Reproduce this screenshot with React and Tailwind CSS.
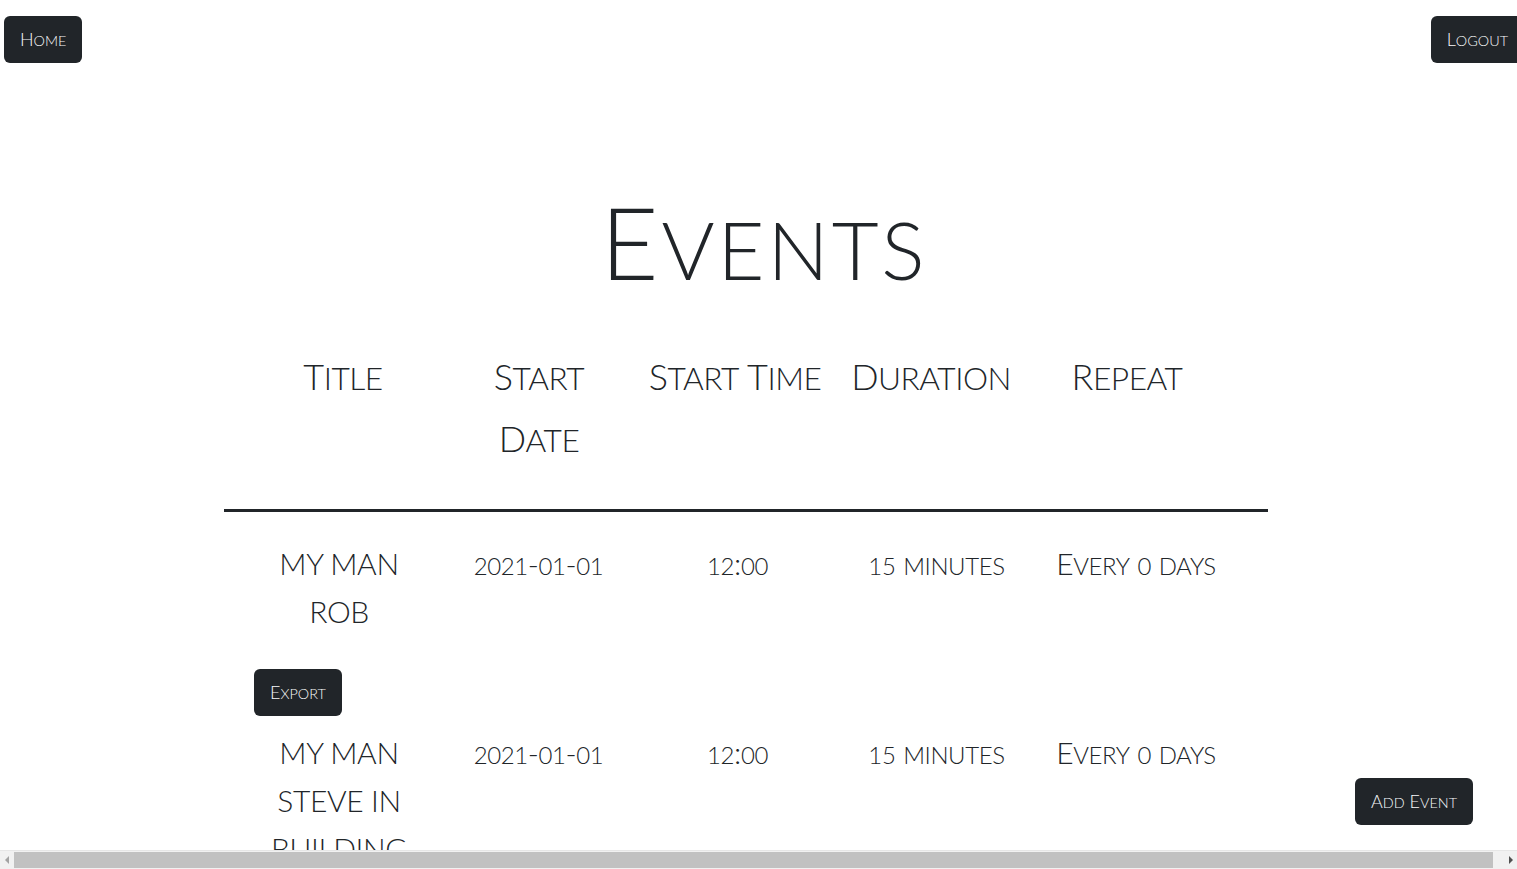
import React from "react";

function SC({ t, small }) {
  return t.split(/([a-z0-9]+)/).map((p, i) =>
    /^[a-z0-9]+$/.test(p) ? (
      <span key={i} className={small + " uppercase"}>
        {p}
      </span>
    ) : (
      <React.Fragment key={i}>{p}</React.Fragment>
    )
  );
}

function Btn({ children }) {
  return (
    <button className="h-[47px] px-4 rounded-[6px] bg-[#212529] text-[#f8f9fa] text-[18px] font-light leading-none flex items-center">
      <span className="whitespace-nowrap">
        <SC t={children} small="text-[0.8em]" />
      </span>
    </button>
  );
}

const rows = [
  { title: "MY MAN ROB", date: "2021-01-01", time: "12:00", dur: "15 minutes", rep: "Every 0 days" },
  { title: "MY MAN STEVE IN BUILDING", date: "2021-01-01", time: "12:00", dur: "15 minutes", rep: "Every 0 days" },
];

export default function App() {
  return (
    <div className="relative h-[869px] w-[1517px] overflow-hidden bg-white text-[#212529] font-['Lato',sans-serif] flex flex-col">
      <div className="h-[850px] overflow-hidden shrink-0">
        <div className="w-[1528px]">
          <div className="flex justify-between px-[4px] pt-[16px]">
            <Btn>Home</Btn>
            <Btn>Logout</Btn>
          </div>
          <h1 className="mt-[118px] text-center text-[100px] leading-[1.2] font-light tracking-[3px]">
            <SC t="Events" small="text-[0.81em]" />
          </h1>
          <div className="ml-[224px] w-[1044px] mt-[45px]">
            <div className="grid grid-cols-[196px_196px_196px_196px_196px] pl-[21px] text-[36px] leading-[60px] font-light tracking-[-0.5px] text-center pb-[39px] border-b-[3px] border-[#212529]">
              <div><SC t="Title" small="text-[0.88em]" /></div>
              <div><SC t="Start" small="text-[0.88em]" /><br /><SC t="Date" small="text-[0.88em]" /></div>
              <div className="whitespace-nowrap"><SC t="Start Time" small="text-[0.88em]" /></div>
              <div><SC t="Duration" small="text-[0.88em]" /></div>
              <div><SC t="Repeat" small="text-[0.88em]" /></div>
            </div>
            {rows.map((r, i) => (
              <div key={i} className={i === 0 ? "pt-[27px]" : "pt-[12px]"}>
                <div className="grid grid-cols-[200px_199px_199px_199px_200px] pl-[15px] text-[30px] leading-[48px] font-light tracking-[-0.4px] text-center">
                  <div className="w-[140px] mx-auto">{r.title}</div>
                  <div><SC t={r.date} small="text-[0.8em]" /></div>
                  <div><SC t={r.time} small="text-[0.8em]" /></div>
                  <div className="whitespace-nowrap"><SC t={r.dur} small="text-[0.8em]" /></div>
                  <div className="whitespace-nowrap"><SC t={r.rep} small="text-[0.8em]" /></div>
                </div>
                {i === 0 && (
                  <div className="pl-[30px] pt-[34px]">
                    <div className="w-fit">
                      <Btn>Export</Btn>
                    </div>
                  </div>
                )}
              </div>
            ))}
          </div>
        </div>
      </div>
      <div className="h-[19px] bg-[#f1f1f1] border-t border-[#e6e6e6] flex items-center shrink-0">
        <div className="w-[14px] flex justify-center">
          <svg width="5" height="8" viewBox="0 0 5 8"><path d="M4 0 L0 4 L4 8 Z" fill="#a3a3a3" /></svg>
        </div>
        <div className="h-[16px] w-[1479px] bg-[#c1c1c1]" />
        <div className="flex-1" />
        <div className="w-[14px] flex justify-center">
          <svg width="5" height="8" viewBox="0 0 5 8"><path d="M1 0 L5 4 L1 8 Z" fill="#505050" /></svg>
        </div>
      </div>
      <div className="absolute left-[1355px] top-[778px]">
        <Btn>Add Event</Btn>
      </div>
    </div>
  );
}
